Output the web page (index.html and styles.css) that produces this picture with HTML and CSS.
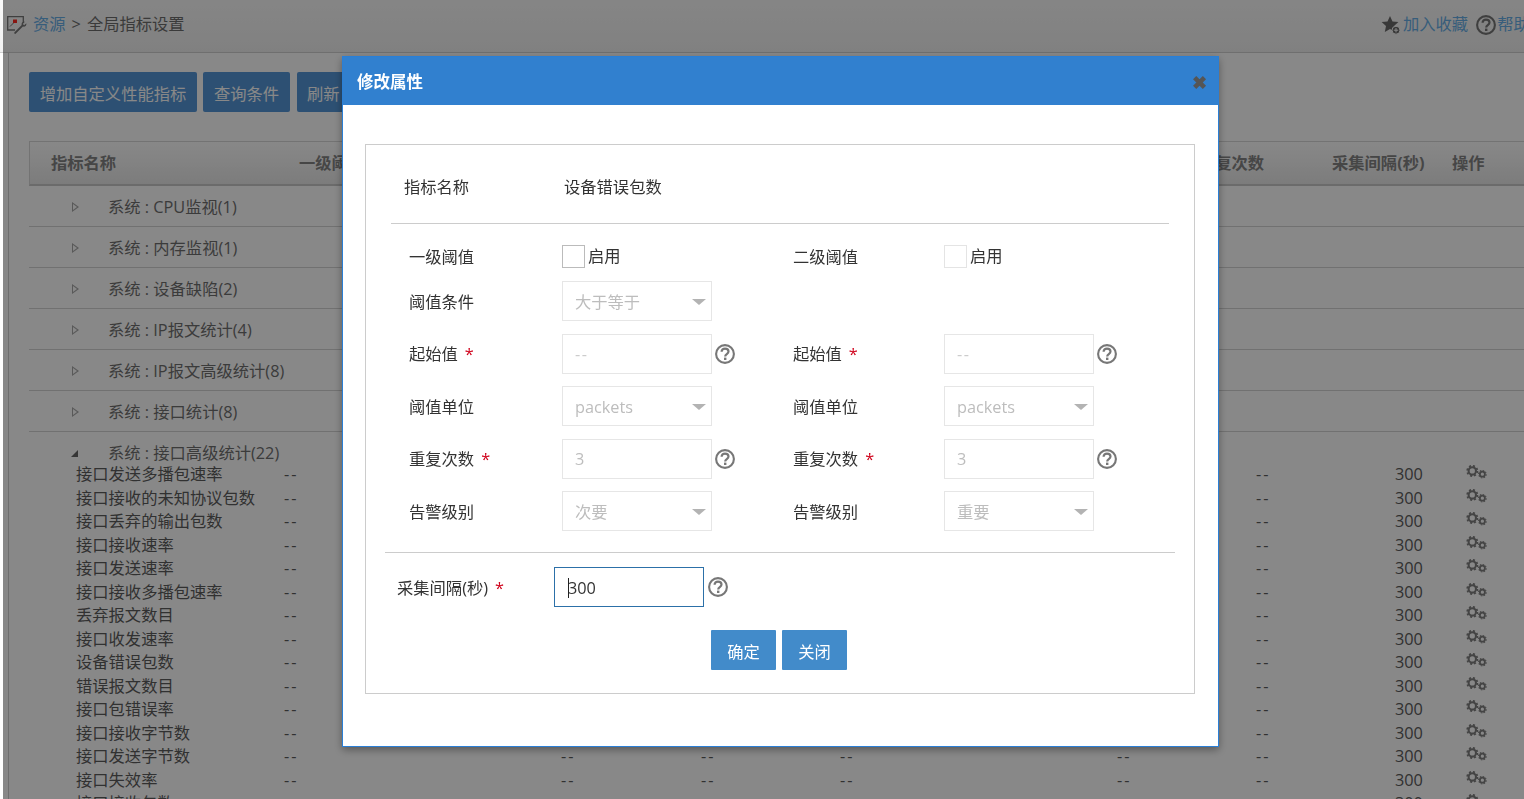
FILE: index.html
```html
<!DOCTYPE html>
<html lang="zh-CN">
<head>
<meta charset="utf-8">
<title>全局指标设置</title>
<link rel="stylesheet" href="styles.css">
</head>
<body>
<svg class="defs" width="0" height="0" aria-hidden="true">
  <symbol id="help" viewBox="0 0 20 20">
    <circle cx="10" cy="10" r="8.900" fill="none" stroke="currentColor" stroke-width="2.100"/>
    <path d="M6.600 7.800C6.600 5.700 8.100 4.600 10 4.600c2 0 3.500 1.100 3.500 2.900 0 2.600-3.300 2.500-3.300 4.900" fill="none" stroke="currentColor" stroke-width="2.200"/>
    <rect x="9" y="13.600" width="2.400" height="2.400" fill="currentColor"/>
  </symbol>
  <symbol id="gears" viewBox="0 0 20 14">
    <circle cx="6" cy="5.500" r="3.500" fill="none" stroke="currentColor" stroke-width="2"/>
    <circle cx="6" cy="5.500" r="4.900" fill="none" stroke="currentColor" stroke-width="1.600" stroke-dasharray="2 1.850"/>
    <circle cx="15.600" cy="8.600" r="2.400" fill="none" stroke="currentColor" stroke-width="1.700"/>
    <circle cx="15.600" cy="8.600" r="3.600" fill="none" stroke="currentColor" stroke-width="1" stroke-dasharray="1.500 1.300"/>
  </symbol>
</svg>

<div class="page">
  <header class="topbar">
    <div class="crumbs">
      <svg class="crumb-icon" viewBox="0 0 20 20" width="20" height="20">
        <path d="M8 15H.7V1.700h15.600V8" fill="none" stroke="#777" stroke-width="1.300"/>
        <path d="M3 11.500L7 7.500" stroke="#777" stroke-width="1"/>
        <rect x="6" y="4.500" width="4" height="3.500" fill="#ff2a22"/>
        <path d="M7.500 17.300l7.200-7.200c-.7-2.100 1-4 3.200-3.300l-2.100 2.100 1.400 1.400 2.100-2.100c.6 2.200-1.300 4-3.400 3.400l-7 7c-.9.900-2.300-.5-1.400-1.300z" fill="#777"/>
      </svg>
      <a class="link">资源</a><span class="sep">&gt;</span><span>全局指标设置</span>
    </div>
    <div class="actions">
      <svg class="star" viewBox="0 0 20 20" width="20" height="20">
        <path d="M9 1l2.500 5.400 5.900.7-4.400 4 1.200 5.800L9 14l-5.200 2.900L5 11.100.6 7.100l5.900-.7z" fill="#6a6a6a"/>
        <circle cx="15" cy="15.200" r="4" fill="#6a6a6a" stroke="#fff" stroke-width="1"/>
        <path d="M12.800 15.200h4.400M15 13v4.400" stroke="#fff" stroke-width="1"/>
      </svg>
      <a class="link">加入收藏</a>
      <svg class="top-help" width="20" height="20"><use href="#help"/></svg>
      <a class="link">帮助</a>
    </div>
  </header>

  <main class="panel">
    <div class="toolbar">
      <button class="btn b-add">增加自定义性能指标</button>
      <button class="btn b-query">查询条件</button>
      <button class="btn b-refresh">刷新</button>
    </div>
    <div class="thead">
      <span class="h-name">指标名称</span>
      <span class="h-first">一级阈值</span>
      <span class="h-repeat">重复次数</span>
      <span class="h-interval">采集间隔(秒)</span>
      <span class="h-op">操作</span>
    </div>
    <div class="group"><i class="tri"></i><span>系统 : CPU监视(1)</span></div>
    <div class="group"><i class="tri"></i><span>系统 : 内存监视(1)</span></div>
    <div class="group"><i class="tri"></i><span>系统 : 设备缺陷(2)</span></div>
    <div class="group"><i class="tri"></i><span>系统 : IP报文统计(4)</span></div>
    <div class="group"><i class="tri"></i><span>系统 : IP报文高级统计(8)</span></div>
    <div class="group"><i class="tri"></i><span>系统 : 接口统计(8)</span></div>
    <div class="group open"><i class="tri-open"></i><span>系统 : 接口高级统计(22)</span></div>
    <div class="rows">
      <div class="row"><span>接口发送多播包速率</span><span>--</span><span>--</span><span>--</span><span>--</span><span>--</span><span>--</span><span>300</span><svg class="gear" width="21" height="15"><use href="#gears"/></svg></div>
      <div class="row"><span>接口接收的未知协议包数</span><span>--</span><span>--</span><span>--</span><span>--</span><span>--</span><span>--</span><span>300</span><svg class="gear" width="21" height="15"><use href="#gears"/></svg></div>
      <div class="row"><span>接口丢弃的输出包数</span><span>--</span><span>--</span><span>--</span><span>--</span><span>--</span><span>--</span><span>300</span><svg class="gear" width="21" height="15"><use href="#gears"/></svg></div>
      <div class="row"><span>接口接收速率</span><span>--</span><span>--</span><span>--</span><span>--</span><span>--</span><span>--</span><span>300</span><svg class="gear" width="21" height="15"><use href="#gears"/></svg></div>
      <div class="row"><span>接口发送速率</span><span>--</span><span>--</span><span>--</span><span>--</span><span>--</span><span>--</span><span>300</span><svg class="gear" width="21" height="15"><use href="#gears"/></svg></div>
      <div class="row"><span>接口接收多播包速率</span><span>--</span><span>--</span><span>--</span><span>--</span><span>--</span><span>--</span><span>300</span><svg class="gear" width="21" height="15"><use href="#gears"/></svg></div>
      <div class="row"><span>丢弃报文数目</span><span>--</span><span>--</span><span>--</span><span>--</span><span>--</span><span>--</span><span>300</span><svg class="gear" width="21" height="15"><use href="#gears"/></svg></div>
      <div class="row"><span>接口收发速率</span><span>--</span><span>--</span><span>--</span><span>--</span><span>--</span><span>--</span><span>300</span><svg class="gear" width="21" height="15"><use href="#gears"/></svg></div>
      <div class="row"><span>设备错误包数</span><span>--</span><span>--</span><span>--</span><span>--</span><span>--</span><span>--</span><span>300</span><svg class="gear" width="21" height="15"><use href="#gears"/></svg></div>
      <div class="row"><span>错误报文数目</span><span>--</span><span>--</span><span>--</span><span>--</span><span>--</span><span>--</span><span>300</span><svg class="gear" width="21" height="15"><use href="#gears"/></svg></div>
      <div class="row"><span>接口包错误率</span><span>--</span><span>--</span><span>--</span><span>--</span><span>--</span><span>--</span><span>300</span><svg class="gear" width="21" height="15"><use href="#gears"/></svg></div>
      <div class="row"><span>接口接收字节数</span><span>--</span><span>--</span><span>--</span><span>--</span><span>--</span><span>--</span><span>300</span><svg class="gear" width="21" height="15"><use href="#gears"/></svg></div>
      <div class="row"><span>接口发送字节数</span><span>--</span><span>--</span><span>--</span><span>--</span><span>--</span><span>--</span><span>300</span><svg class="gear" width="21" height="15"><use href="#gears"/></svg></div>
      <div class="row"><span>接口失效率</span><span>--</span><span>--</span><span>--</span><span>--</span><span>--</span><span>--</span><span>300</span><svg class="gear" width="21" height="15"><use href="#gears"/></svg></div>
      <div class="row"><span>接口接收包数</span><span>--</span><span>--</span><span>--</span><span>--</span><span>--</span><span>--</span><span>300</span><svg class="gear" width="21" height="15"><use href="#gears"/></svg></div>
    </div>
  </main>
</div>

<div class="overlay"></div>

<section class="modal">
  <div class="modal-head">
    <h2>修改属性</h2>
    <span class="close">✖</span>
  </div>
  <div class="modal-body">
    <div class="box">
      <div class="name-row"><span class="name-label">指标名称</span><span>设备错误包数</span></div>
      <div class="rule rule-inner"></div>
      <div class="form-grid">
        <label class="lbl">一级阈值</label>
        <div class="check-wrap"><i class="check"></i><span>启用</span></div>
        <label class="lbl">二级阈值</label>
        <div class="check-wrap"><i class="check check-soft"></i><span>启用</span></div>

        <label class="lbl lbl-low">阈值条件</label>
        <div class="ctl select">大于等于</div>
        <span></span><span></span>

        <label class="lbl">起始值<b class="req">*</b></label>
        <div class="ctl-help"><div class="ctl dim">--</div><svg class="help" width="20" height="20"><use href="#help"/></svg></div>
        <label class="lbl">起始值<b class="req">*</b></label>
        <div class="ctl-help"><div class="ctl dim">--</div><svg class="help" width="20" height="20"><use href="#help"/></svg></div>

        <label class="lbl lbl-low">阈值单位</label>
        <div class="ctl select">packets</div>
        <label class="lbl lbl-low">阈值单位</label>
        <div class="ctl select">packets</div>

        <label class="lbl">重复次数<b class="req">*</b></label>
        <div class="ctl-help"><div class="ctl">3</div><svg class="help" width="20" height="20"><use href="#help"/></svg></div>
        <label class="lbl">重复次数<b class="req">*</b></label>
        <div class="ctl-help"><div class="ctl">3</div><svg class="help" width="20" height="20"><use href="#help"/></svg></div>

        <label class="lbl lbl-low">告警级别</label>
        <div class="ctl select">次要</div>
        <label class="lbl lbl-low">告警级别</label>
        <div class="ctl select">重要</div>
      </div>
      <div class="rule rule-outer"></div>
      <div class="interval">
        <label class="interval-label">采集间隔(秒)<b class="req">*</b></label>
        <div class="focus-input"><i class="caret"></i>300</div>
        <svg class="help" width="20" height="20"><use href="#help"/></svg>
      </div>
      <div class="modal-actions">
        <button class="mbtn">确定</button>
        <button class="mbtn">关闭</button>
      </div>
    </div>
  </div>
</section>
</body>
</html>
```

FILE: styles.css
```css
* { box-sizing: border-box; }
html, body { margin: 0; height: 100%; }
body {
  width: 1524px;
  height: 799px;
  overflow: hidden;
  background: #fff;
  color: #333;
  font: 16.3px/1.4 "Open Sans", "Noto Sans CJK SC", sans-serif;
}
.defs { position: absolute; }
.page { width: 1524px; height: 799px; overflow: hidden; color: #6e6e6e; }

.topbar {
  height: 53px;
  display: flex;
  justify-content: space-between;
  align-items: center;
  padding: 0 0 3px 7px;
  background: linear-gradient(#fafafa, #f1f1f1);
  border-bottom: 1px solid #d0d0d0;
  white-space: nowrap;
}
.crumbs { display: flex; align-items: center; }
.crumb-icon { margin-right: 6px; }
.link { color: #68aee6; }
.sep { margin: 0 6px; }
.actions { display: flex; align-items: center; width: 143px; flex: none; overflow: hidden; }
.star { flex: none; margin-right: 2px; }
.top-help { flex: none; margin: 0 1px 0 8px; color: #777; }
.actions .link { flex: none; }

.panel {
  margin-left: 8px;
  width: 1530px;
  border-left: 1px solid #d0d0d0;
  padding: 19px 0 0 20px;
}
.toolbar { display: flex; gap: 6px; height: 40px; }
.btn {
  height: 40px;
  border: 0;
  border-radius: 2px;
  background: #5597d8;
  color: #fff;
  padding: 5px 0 0;
  font: inherit;
}
.b-add { width: 168px; }
.b-query { width: 87px; }
.b-refresh { width: 60px; margin-left: 1px; text-align: left; padding-left: 10px; }

.thead {
  margin-top: 29px;
  height: 45px;
  background: linear-gradient(#fff, #e9e9e9);
  border: 1px solid #d8d8d8;
  border-bottom: 2px solid #c8c8c8;
  border-right: 0;
  display: grid;
  grid-template-columns: 248px 900px 133px 120px 60px;
  align-items: center;
  padding-left: 21px;
  font-weight: 700;
  color: #848484;
  white-space: nowrap;
}

.group {
  height: 41px;
  padding: 1px 0 0 42px;
  display: flex;
  align-items: center;
  border-bottom: 1px solid #d4d4d4;
  color: #707070;
}
.group span { margin-left: 30px; padding-top: 2px; }
.group.open { height: 31px; padding-top: 11px; border-bottom: 0; }
.group.open span { padding-top: 0; }
.tri {
  width: 0; height: 0; flex: none;
  margin-left: 1px;
  position: relative;
  border-left: 7px solid #a8a8a8;
  border-top: 5.500px solid transparent;
  border-bottom: 5.500px solid transparent;
}
.tri::after {
  content: "";
  position: absolute;
  left: -6px;
  top: -3px;
  border-left: 4px solid #fff;
  border-top: 3px solid transparent;
  border-bottom: 3px solid transparent;
}
.tri + span { margin-left: 29px; }
.tri-open {
  width: 0; height: 0; flex: none;
  border-bottom: 7px solid #666;
  border-left: 7px solid transparent;
}

.rows { margin-left: 47px; }
.row {
  height: 23.500px;
  display: grid;
  grid-template-columns: 208px 277px 140px 139px 277px 139px 139px 71px 30px;
  align-items: center;
  line-height: 23.500px;
  white-space: nowrap;
  color: #5c5c5c;
}
.row span:nth-child(n+2):nth-child(-n+7) { letter-spacing: 2px; }
.gear { color: #808080; margin-top: -4px; }

.overlay {
  position: fixed;
  inset: 0 0 0 3px;
  background: rgba(0, 0, 0, .465);
}

.modal {
  position: fixed;
  left: 342px;
  top: 56px;
  width: 877px;
  height: 691px;
  background: #fff;
  border: 1px solid #2a7fd6;
  box-shadow: 0 3px 8px rgba(0, 0, 0, .35);
}
.modal-head {
  height: 48px;
  background: #3180cf;
  display: flex;
  align-items: center;
  justify-content: space-between;
  padding: 2px 11px 0 14px;
  color: #fff;
}
.modal-head h2 { margin: 0; font-size: 16.500px; font-weight: 700; }
.close { color: #555; font-size: 18px; font-weight: 700; line-height: 1; }
.modal-body { padding: 39px 23px 0 22px; }
.box {
  height: 550px;
  border: 1px solid #ccc;
  padding: 0 19px;
  color: #333;
}
.name-row {
  height: 78px;
  display: flex;
  align-items: center;
  padding: 7px 0 0 19px;
  white-space: nowrap;
}
.name-label { width: 160px; }
.rule { height: 1px; background: #ccc; }
.rule-inner { margin: 0 6px; }
.rule-outer { margin: 21px 0 0; }

.form-grid {
  margin-top: 20.500px;
  padding-left: 24px;
  display: grid;
  grid-template-columns: 153px 231px 151px 200px;
  grid-template-rows: 24px repeat(5, 40px);
  row-gap: 12.500px;
  align-items: center;
}
.lbl { white-space: nowrap; padding-top: 1px; }
.lbl-low { padding-top: 3px; }
.req { color: #d0021b; font-weight: 400; margin-left: 7px; }
.check-wrap { display: flex; align-items: center; gap: 3px; }
.check { width: 23px; height: 23px; border: 1px solid #bbb; flex: none; }
.check-soft { border-color: #e4e4e4; }
.ctl {
  width: 150px;
  height: 40px;
  border: 1px solid #e6e6e6;
  padding: 0 12px;
  line-height: 38px;
  color: #bdbdbd;
  position: relative;
  white-space: nowrap;
}
.select { line-height: 40px; }
.dim { color: #ccc; letter-spacing: 1.500px; }
.select::after {
  content: "";
  position: absolute;
  right: 5px;
  top: 17px;
  border-top: 6px solid #b3b3b3;
  border-left: 7px solid transparent;
  border-right: 7px solid transparent;
}
.ctl-help { display: flex; align-items: center; gap: 3px; }
.help { color: #777; flex: none; }

.interval {
  margin-top: 14px;
  display: flex;
  align-items: center;
  height: 40px;
  padding-left: 12px;
}
.interval-label { width: 157px; flex: none; white-space: nowrap; padding-top: 3px; }
.focus-input {
  width: 150px;
  height: 40px;
  flex: none;
  border: 1px solid #2c70a8;
  padding-left: 13px;
  line-height: 40px;
  margin-right: 4px;
  position: relative;
}
.caret {
  position: absolute;
  left: 13px;
  top: 10px;
  width: 1px;
  height: 20px;
  background: #222;
}
.modal-actions {
  margin-top: 23px;
  padding-right: 2px;
  display: flex;
  justify-content: center;
  gap: 6px;
}
.mbtn {
  width: 65px;
  height: 40px;
  border: 0;
  border-radius: 1px;
  background: #428bca;
  color: #fff;
  font: inherit;
  padding: 4px 0 0;
}
```
